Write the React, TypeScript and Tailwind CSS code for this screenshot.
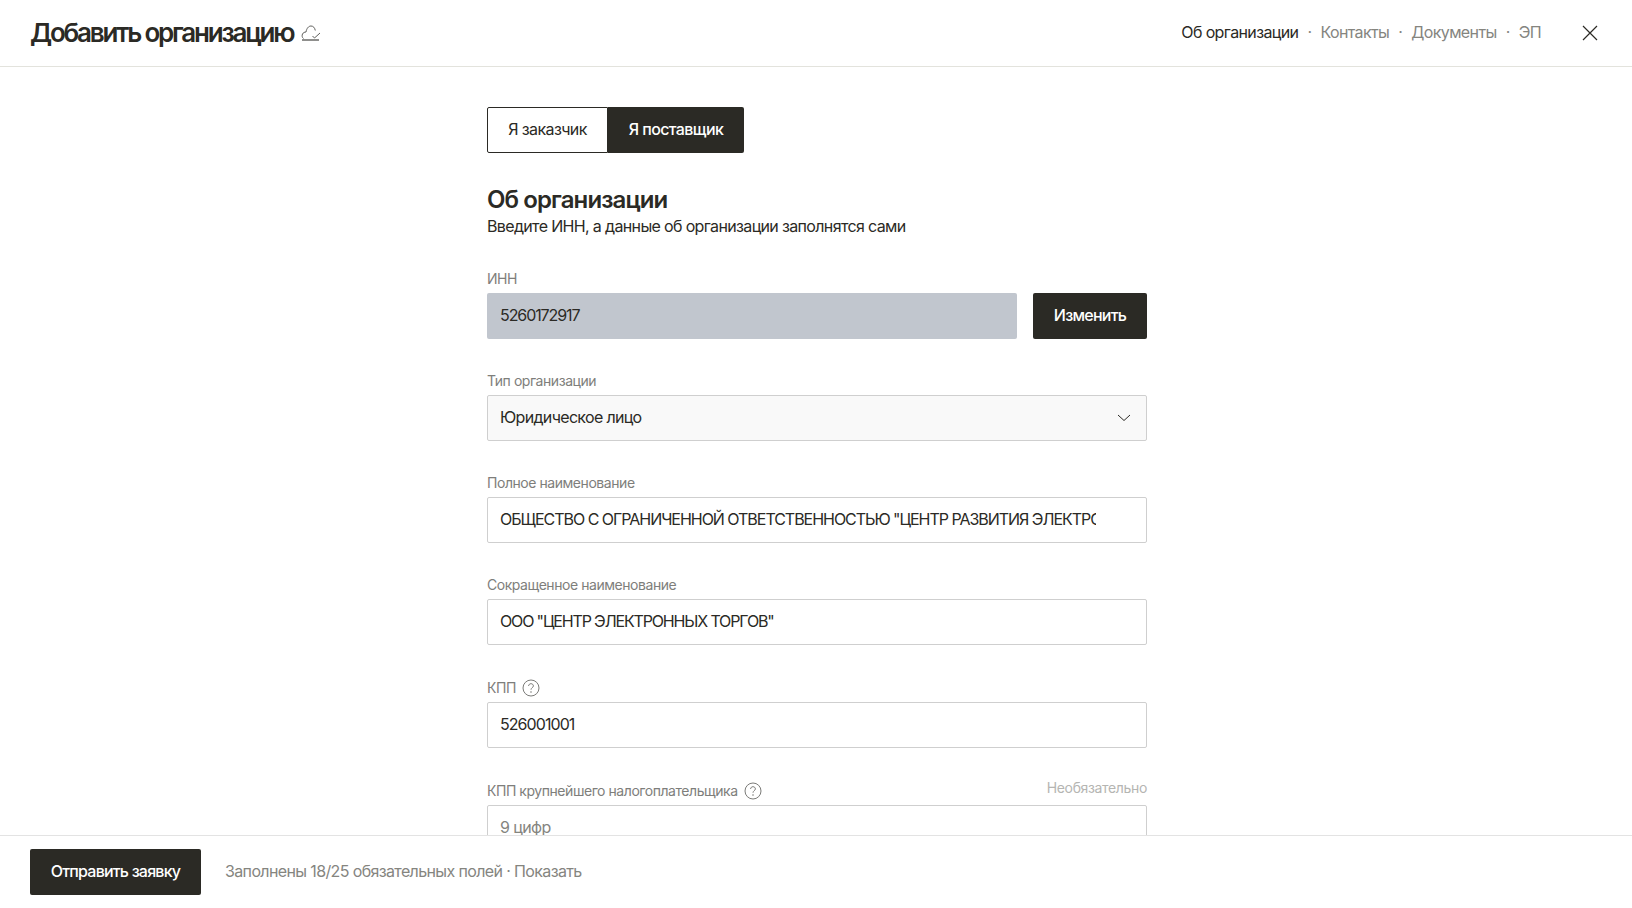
const font = "font-['Inter',sans-serif]";

function Hint() {
  return (
    <svg width="18" height="18" viewBox="0 0 18 18" fill="none" className="shrink-0 text-[#7b7b78]">
      <circle cx="9" cy="9" r="8" stroke="currentColor" strokeWidth="1" />
      <path d="M6.6 7c0-1.4 1.1-2.3 2.4-2.3s2.4.9 2.4 2.2c0 1.7-2.4 1.9-2.4 3.8" stroke="currentColor" strokeWidth="1" />
      <circle cx="9" cy="13" r="0.8" fill="currentColor" />
    </svg>
  );
}

function Label({ children, hint }: { children: string; hint?: boolean }) {
  return (
    <div className={`flex items-center gap-[6px] text-[14px] leading-[20px] tracking-[-0.45px] text-[#7e7e7b] ${hint ? "h-[21px]" : "h-[20px]"}`}>
      <span>{children}</span>
      {hint && <Hint />}
    </div>
  );
}

function Field({ label, value, hint, tracking }: { label: string; value: string; hint?: boolean; tracking: string }) {
  return (
    <div className="mb-[32px] flex flex-col gap-[4px]">
      <Label hint={hint}>{label}</Label>
      <div className="flex h-[46px] items-center overflow-hidden rounded-[2px] border border-[#cfcfcf] bg-white pb-[2px] pl-[12px] pr-[50px] text-[16px] text-[#2b2a25]">
        <span className={`block w-full overflow-hidden whitespace-nowrap ${tracking}`}>{value}</span>
      </div>
    </div>
  );
}

export default function App() {
  return (
    <div className={`flex h-screen flex-col overflow-hidden bg-white text-[#2b2a25] ${font}`}>
      <header className="flex h-[67px] shrink-0 items-center justify-between border-b border-[#e3e3dd] pl-[30px] pr-[34px]">
        <div className="flex items-center gap-[8px]">
          <h1 className="text-[26px] font-semibold leading-[32px] tracking-[-2.2px]">Добавить организацию</h1>
          <svg width="20" height="17" viewBox="0 0 20 17" fill="none" className="text-[#5f5f5c]">
            <path d="M2.5 13.5C1 12.5.8 10.5 1.5 9 2.2 7.6 3.6 7 5 7 5.6 3.5 7.5 1 10 1c2.3 0 3.8 1.8 4.3 4.5" stroke="currentColor" />
            <path d="M11.5 11l2 2 5.5-5" stroke="currentColor" />
            <path d="M1 15h17" stroke="currentColor" strokeWidth="1.4" />
          </svg>
        </div>
        <div className="flex items-center">
          <nav className="flex items-center pb-[2px] text-[16px] tracking-[-0.62px] text-[#85857f]">
            <span className="text-[#2b2a25]">Об организации</span>
            <span className="mx-[9px]">·</span>
            <span>Контакты</span>
            <span className="mx-[9px]">·</span>
            <span>Документы</span>
            <span className="mx-[9px]">·</span>
            <span>ЭП</span>
          </nav>
          <svg width="16" height="16" viewBox="0 0 16 16" fill="none" className="ml-[41px]">
            <path d="M1 1l14 14M15 1L1 15" stroke="#2b2a25" strokeWidth="1.2" />
          </svg>
        </div>
      </header>

      <main className="min-h-0 flex-1 overflow-hidden pl-[487px]">
        <div className="w-[660px] pt-[40px]">
          <div className="flex h-[46px] text-[16px] tracking-[-0.6px]">
            <button className="w-[121px] rounded-l-[2px] border border-[#2b2a25] bg-white pb-[2px]">Я заказчик</button>
            <button className="w-[136px] rounded-r-[2px] bg-[#2b2a25] pb-[2px] font-medium text-white">Я поставщик</button>
          </div>

          <h2 className="mt-[31px] text-[24px] font-semibold leading-[32px] tracking-[-0.9px]">Об организации</h2>
          <p className="text-[16px] leading-[20px] tracking-[-0.65px]">Введите ИНН, а данные об организации заполнятся сами</p>

          <div className="mt-[33px]">
            <div className="mb-[32px] flex flex-col gap-[4px]">
              <Label>ИНН</Label>
              <div className="flex gap-[16px]">
                <div className="flex h-[46px] flex-1 items-center rounded-[2px] bg-[#c1c6ce] pb-[2px] pl-[13px] text-[16px] tracking-[-1.08px]">5260172917</div>
                <button className="h-[46px] w-[114px] rounded-[2px] bg-[#2b2a25] pb-[2px] text-[16px] font-medium tracking-[-0.75px] text-white">Изменить</button>
              </div>
            </div>

            <div className="mb-[32px] flex flex-col gap-[4px]">
              <Label>Тип организации</Label>
              <div className="flex h-[46px] items-center justify-between rounded-[2px] border border-[#cfcfcf] bg-[#f9f9f9] pl-[12px] pr-[15px] text-[16px] tracking-[-0.67px]">
                <span className="pb-[2px]">Юридическое лицо</span>
                <svg width="14" height="8" viewBox="0 0 14 8" fill="none">
                  <path d="M1 1l6 5.5L13 1" stroke="#2b2a25" />
                </svg>
              </div>
            </div>

            <Field label="Полное наименование" value={'ОБЩЕСТВО С ОГРАНИЧЕННОЙ ОТВЕТСТВЕННОСТЬЮ "ЦЕНТР РАЗВИТИЯ ЭЛЕКТРОННЫХ ТОРГОВ"'} tracking="tracking-[-1.03px]" />
            <Field label="Сокращенное наименование" value={'ООО "ЦЕНТР ЭЛЕКТРОННЫХ ТОРГОВ"'} tracking="tracking-[-1.15px]" />
            <Field label="КПП" value="526001001" hint tracking="tracking-[-0.93px]" />

            <div className="flex flex-col gap-[4px]">
              <div className="flex h-[21px] items-start justify-between">
                <Label hint>КПП крупнейшего налогоплательщика</Label>
                <span className="text-[14px] leading-[16px] tracking-[-0.35px] text-[#b5b5b2]">Необязательно</span>
              </div>
              <div className="flex h-[46px] items-center rounded-[2px] border border-[#cfcfcf] bg-white pb-[2px] pl-[12px] text-[16px] tracking-[-0.6px] text-[#85857f]">9 цифр</div>
            </div>
          </div>
        </div>
      </main>

      <footer className="flex h-[73px] shrink-0 items-start gap-[24px] border-t border-[#e3e3e3] bg-white pl-[30px] pt-[13px]">
        <button className="h-[46px] w-[171px] rounded-[2px] bg-[#2b2a25] pb-[2px] text-[16px] font-medium tracking-[-0.8px] text-white">Отправить заявку</button>
        <div className="flex h-[46px] items-center pb-[2px] text-[16px] tracking-[-0.63px] text-[#85857f]">Заполнены 18/25 обязательных полей · Показать</div>
      </footer>
    </div>
  );
}
